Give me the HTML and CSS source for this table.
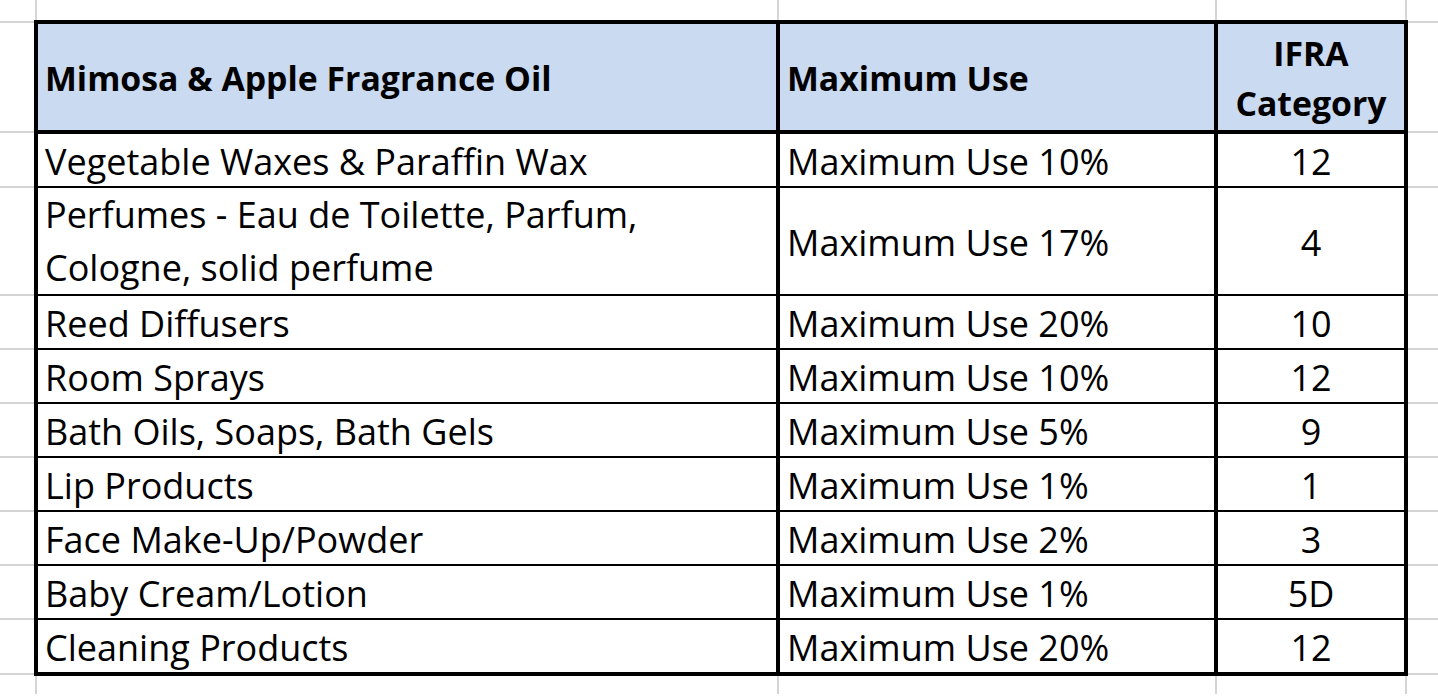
FILE: index.html
```html
<!DOCTYPE html>
<html lang="en">
<head>
<meta charset="utf-8">
<title>Mimosa &amp; Apple Fragrance Oil</title>
<link rel="stylesheet" href="styles.css">
</head>
<body>
<table class="sheet">
  <colgroup>
    <col class="c-gutter-l">
    <col class="c-a">
    <col class="c-b">
    <col class="c-c">
    <col class="c-gutter-r">
  </colgroup>
  <tbody>
    <tr class="r-top"><td class="g"></td><td class="g"></td><td class="g"></td><td class="g"></td><td class="g"></td></tr>
    <tr class="r-head">
      <td class="g"></td>
      <td class="h">Mimosa &amp; Apple Fragrance Oil</td>
      <td class="h">Maximum Use</td>
      <td class="h center">IFRA<br>Category</td>
      <td class="g"></td>
    </tr>
    <tr class="r-first">
      <td class="g"></td>
      <td class="d">Vegetable Waxes &amp; Paraffin Wax</td>
      <td class="d">Maximum Use 10%</td>
      <td class="d center">12</td>
      <td class="g"></td>
    </tr>
    <tr class="r-double">
      <td class="g"></td>
      <td class="d wrap">Perfumes - Eau de Toilette, Parfum,<br>Cologne, solid perfume</td>
      <td class="d">Maximum Use 17%</td>
      <td class="d center">4</td>
      <td class="g"></td>
    </tr>
    <tr class="r-std">
      <td class="g"></td>
      <td class="d">Reed Diffusers</td>
      <td class="d">Maximum Use 20%</td>
      <td class="d center">10</td>
      <td class="g"></td>
    </tr>
    <tr class="r-std">
      <td class="g"></td>
      <td class="d">Room Sprays</td>
      <td class="d">Maximum Use 10%</td>
      <td class="d center">12</td>
      <td class="g"></td>
    </tr>
    <tr class="r-std">
      <td class="g"></td>
      <td class="d">Bath Oils, Soaps, Bath Gels</td>
      <td class="d">Maximum Use 5%</td>
      <td class="d center">9</td>
      <td class="g"></td>
    </tr>
    <tr class="r-std">
      <td class="g"></td>
      <td class="d">Lip Products</td>
      <td class="d">Maximum Use 1%</td>
      <td class="d center">1</td>
      <td class="g"></td>
    </tr>
    <tr class="r-std">
      <td class="g"></td>
      <td class="d">Face Make-Up/Powder</td>
      <td class="d">Maximum Use 2%</td>
      <td class="d center">3</td>
      <td class="g"></td>
    </tr>
    <tr class="r-std">
      <td class="g"></td>
      <td class="d">Baby Cream/Lotion</td>
      <td class="d">Maximum Use 1%</td>
      <td class="d center">5D</td>
      <td class="g"></td>
    </tr>
    <tr class="r-final">
      <td class="g"></td>
      <td class="d">Cleaning Products</td>
      <td class="d">Maximum Use 20%</td>
      <td class="d center">12</td>
      <td class="g"></td>
    </tr>
    <tr class="r-bottom"><td class="g"></td><td class="g"></td><td class="g"></td><td class="g"></td><td class="g"></td></tr>
  </tbody>
</table>
</body>
</html>
```

FILE: styles.css
```css
html, body {
  margin: 0;
  padding: 0;
  background: #ffffff;
  overflow: hidden;
  width: 1438px;
  height: 696px;
}

.sheet {
  border-collapse: collapse;
  table-layout: fixed;
  width: 1438px;
  font-family: "Open Sans", Lato, sans-serif;
  font-size: 36px;
  color: #000000;
}

.c-gutter-l { width: 36px; }
.c-a { width: 742px; }
.c-b { width: 438px; }
.c-c { width: 190px; }
.c-gutter-r { width: 32px; }

.sheet td {
  padding: 0 7px;
  vertical-align: middle;
  white-space: nowrap;
  border: 2px solid #d4d4d4;
  line-height: 1.2;
}

.sheet tr td:first-child { border-left: none; }
.sheet tr td:last-child { border-right: none; }

.r-top td { border-top: none; height: 20px; }
.r-head td { height: 106px; }
.r-first td { height: 52px; }
.r-double td { height: 106px; }
.r-std td { height: 52px; }
.r-final td { height: 52px; }
.r-bottom td { border-bottom: none; height: 18px; }

.sheet td.h {
  background: #cadaf0;
  font-weight: 700;
  font-size: 33.8px;
  line-height: 50px;
  padding-top: 2px;
  height: 104px;
  border: 4px solid #000;
}

.sheet td.d {
  padding-top: 4px;
  height: 48px;
  line-height: 42px;
  border-top: 2px solid #000;
  border-bottom: 2px solid #000;
  border-left: 4px solid #000;
  border-right: 4px solid #000;
}

.r-double td.d {
  height: 102px;
}

.sheet td.wrap {
  line-height: 53px;
  padding-top: 0;
  height: 106px;
}

.r-final td.d {
  border-bottom: 4px solid #000;
}

.center {
  text-align: center;
}
```
